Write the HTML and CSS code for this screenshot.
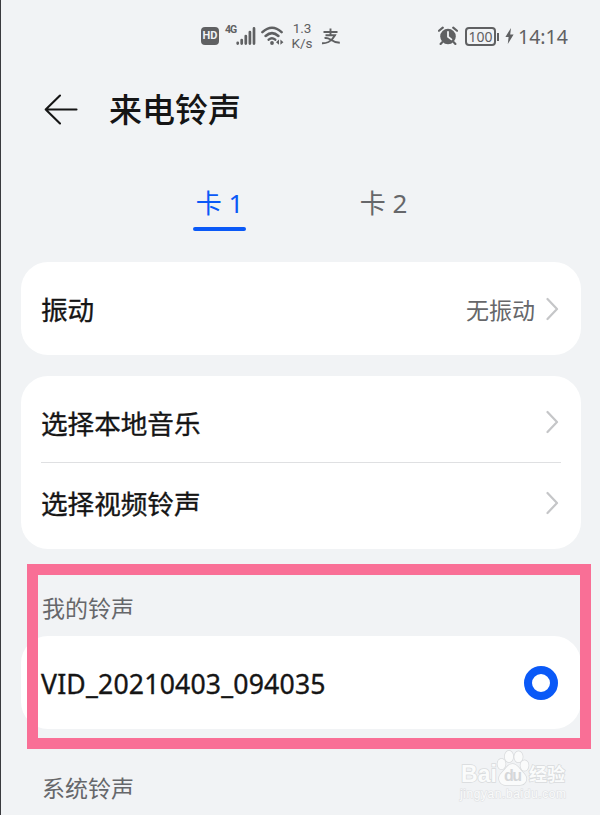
FILE: index.html
```html
<!DOCTYPE html>
<html lang="zh-CN">
<head>
    <meta charset="UTF-8">
    <meta name="viewport" content="width=device-width, initial-scale=1.0">
    <title>来电铃声</title>
    <link rel="stylesheet" href="styles.css">
</head>
<body>
    <div class="status-bar">
        <span class="hd">HD</span>
        <span class="network">4G</span>
        <svg class="signal" width="20" height="18" viewBox="0 0 20 18">
            <path d="M1.7 16.6v-.8M5.7 16.6v-3.600M9.8 16.600V9M13.900 16.600V5M18 16.600V1.400" stroke="#5f6062" stroke-width="2.7" stroke-linecap="round"/>
        </svg>
        <svg class="wifi" width="23" height="20" viewBox="0 0 23 20">
            <path d="M1.4 6.2Q11 -2.8 20.6 6.2M4.6 10Q11 4.2 17.4 10M7.7 13.6Q11 10.8 14.2 13.6" fill="none" stroke="#5f6062" stroke-width="2.5" stroke-linecap="round"/>
            <circle cx="11" cy="17" r="1.9" fill="#5f6062"/>
            <path d="M18 13.6v5.2l-3-2.6zM19.4 13.6v5.2l3-2.6z" fill="#5f6062"/>
        </svg>
        <span class="speed">1.3<br>K/s</span>
        <svg class="pay" width="20" height="18" viewBox="0 0 20 18">
            <path d="M2.5 5h14M9.5 1.500v6.500M4.500 8.300H14Q11.500 13 7.500 15Q4 16.500 1 16.300M3.500 11.200Q6 10.500 9.500 12.500Q13.500 15.500 18.800 15.800" fill="none" stroke="#5f6062" stroke-width="1.9"/>
        </svg>
        <svg class="alarm" width="20" height="20" viewBox="0 0 20 20">
            <circle cx="10" cy="10.5" r="7.8" fill="#5f6062"/>
            <path d="M1 4.8L4.8 1.6M19 4.8L15.2 1.6M4.2 16.2L2.6 18M15.8 16.2L17.4 18" stroke="#5f6062" stroke-width="2.1" stroke-linecap="round"/>
            <path d="M10 5.8v5l3.4 2.6" fill="none" stroke="#f1f3f5" stroke-width="1.8" stroke-linecap="round"/>
        </svg>
        <span class="battery">100</span>
        <svg class="bolt" width="9" height="16" viewBox="0 0 9 16">
            <path d="M6 0L0.4 9H3.6L2.8 16L8.6 6.4H5.2z" fill="#5f6062"/>
        </svg>
        <span class="clock">14:14</span>
    </div>

    <div class="header">
        <svg width="34" height="32" viewBox="0 0 34 32">
            <path d="M16 1.5L1.7 15.500L16 29.500M1.7 15.500H32.5" fill="none" stroke="#151515" stroke-width="2.1" stroke-linecap="round" stroke-linejoin="round"/>
        </svg>
        <h1>来电铃声</h1>
    </div>

    <div class="tabs">
        <div class="tab active">卡 1</div>
        <div class="tab">卡 2</div>
    </div>

    <div class="card">
        <div class="row">
            <span>振动</span>
            <span class="value">无振动</span>
            <svg class="arrow" width="13" height="24" viewBox="0 0 13 24"><path d="M1.5 2L11 12L1.5 22"/></svg>
        </div>
    </div>

    <div class="card double">
        <div class="row">
            <span>选择本地音乐</span>
            <svg class="arrow" width="13" height="24" viewBox="0 0 13 24"><path d="M1.5 2L11 12L1.5 22"/></svg>
        </div>
        <div class="row">
            <span>选择视频铃声</span>
            <svg class="arrow" width="13" height="24" viewBox="0 0 13 24"><path d="M1.5 2L11 12L1.5 22"/></svg>
        </div>
    </div>

    <div class="section-title">我的铃声</div>
    <div class="card">
        <div class="row">
            <span class="file">VID_20210403_094035</span>
            <span class="radio"></span>
        </div>
    </div>
    <div class="section-title">系统铃声</div>

    <div class="highlight"></div>

    <div class="watermark">
        <svg width="114" height="60" viewBox="0 0 114 60">
            <g class="mark">
                <text class="brand" x="3" y="34" textLength="36">Bai</text>
                <ellipse cx="43.5" cy="16" rx="4" ry="5.2"/>
                <ellipse cx="51" cy="8.5" rx="4.2" ry="5.7"/>
                <ellipse cx="60.5" cy="8.8" rx="4.2" ry="5.5"/>
                <ellipse cx="66.5" cy="17.5" rx="4" ry="5.2"/>
                <path d="M54.5 16C50 16 48.5 20 45 23.5C41 27.5 40 30 42 34C44 38 49 37 54.5 37C60 37 65 38 67.5 34C69.5 30 68 27.5 64 23.5C60.5 20 59 16 54.5 16z"/>
                <text class="jingyan" x="71" y="33" textLength="36">经验</text>
            </g>
            <text class="du" x="46" y="33" textLength="18">du</text>
            <text class="site" x="2" y="50" textLength="106">jingyan.baidu.com</text>
        </svg>
    </div>
</body>
</html>
```
FILE: styles.css
```css
* {
    box-sizing: border-box;
}
body {
    margin: 0;
    height: 815px;
    padding: 0 19px 0 20px;
    border-left: 1px solid #3a3a3e;
    background: #f1f3f5;
    color: #151515;
    font-family: "Noto Sans", "Noto Sans CJK SC", sans-serif;
    position: relative;
    overflow: hidden;
}
.status-bar {
    display: flex;
    align-items: center;
    height: 72px;
    padding-left: 180px;
    color: #5f6062;
}
.hd {
    width: 18px;
    height: 18px;
    border-radius: 4px;
    background: #5f6062;
    color: #f1f3f5;
    font: bold 11px/18px "Roboto", sans-serif;
    text-align: center;
}
.network {
    margin: -12px 0 0 6px;
    width: 10px;
    font: bold 10.5px/12px "Roboto", sans-serif;
    letter-spacing: -1px;
}
.signal {
    margin-left: 1px;
}
.wifi {
    margin-left: 5px;
}
.speed {
    width: 22px;
    margin-left: 7px;
    font: 13.5px/15px "Roboto", sans-serif;
    text-align: center;
}
.pay {
    margin-left: 8px;
}
.alarm {
    margin-left: 97px;
}
.battery {
    width: 31px;
    height: 19px;
    margin-left: 7px;
    border: 2px solid #5f6062;
    border-radius: 4px;
    font: 14px/15px "Noto Sans", sans-serif;
    text-align: center;
    position: relative;
}
.battery::after {
    content: "";
    position: absolute;
    top: 4px;
    right: -5px;
    width: 2px;
    height: 8px;
    background: #5f6062;
}
.bolt {
    margin-left: 9px;
}
.clock {
    margin-left: 4px;
    font-size: 19.5px;
}
.header {
    display: flex;
    align-items: center;
    height: 76px;
    padding-left: 23px;
    gap: 31px;
}
.header h1 {
    margin: 0;
    font-size: 33px;
    font-weight: 500;
    line-height: 40px;
}
.tabs {
    display: flex;
    gap: 111px;
    height: 114px;
    padding: 35px 0 0 172px;
}
.tab {
    width: 53px;
    height: 48px;
    color: #66676a;
    font-size: 26px;
    line-height: 40px;
    text-align: center;
    white-space: nowrap;
}
.tab.active {
    color: #0a59f7;
    position: relative;
}
.tab.active::after {
    content: "";
    position: absolute;
    left: 0;
    bottom: 0;
    width: 53px;
    height: 4px;
    border-radius: 2px;
    background: #0a59f7;
}
.card {
    height: 93px;
    padding: 0 20px;
    border-radius: 27px;
    background: #fff;
}
.card.double {
    height: 173px;
    margin-top: 21px;
    padding-top: 6px;
}
.row {
    display: flex;
    align-items: center;
    height: 93px;
    font-size: 26.6px;
    -webkit-text-stroke: 0.35px #151515;
}
.double .row {
    height: 80px;
}
.double .row + .row {
    border-top: 1px solid #dfe0e2;
}
.value {
    margin-left: auto;
    color: #66676a;
    font-size: 23px;
    -webkit-text-stroke: 0;
}
.arrow {
    margin-left: auto;
    margin-right: 2px;
    fill: none;
    stroke: #c5c6c8;
    stroke-width: 2.2;
    stroke-linecap: round;
    stroke-linejoin: round;
}
.value + .arrow {
    margin-left: 11px;
}
.file {
    padding-top: 2px;
    letter-spacing: 0.2px;
}
.radio {
    width: 34px;
    height: 34px;
    margin-left: auto;
    margin-right: 3px;
    border: 8.5px solid #0a59f7;
    border-radius: 50%;
}
.section-title {
    height: 87px;
    padding: 42px 21px 0;
    color: #66676a;
    font-size: 23px;
    line-height: 34px;
}
.highlight {
    position: absolute;
    left: 26px;
    top: 564px;
    width: 564px;
    height: 185px;
    border: 11px solid #f96f96;
}
.watermark {
    position: absolute;
    left: 457px;
    top: 748px;
}
.watermark svg {
    display: block;
}
.mark {
    fill: #fafbfb;
    stroke: #d9dbdd;
    stroke-width: 1.5;
    paint-order: stroke;
}
.brand {
    font: bold 23px "Liberation Sans", sans-serif;
}
.jingyan {
    font: bold 18px "Noto Sans CJK SC", sans-serif;
}
.du {
    fill: #d5d7d9;
    font: bold 16px "Liberation Sans", sans-serif;
}
.site {
    fill: #fafbfb;
    stroke: #dfe1e3;
    stroke-width: 1.2;
    paint-order: stroke;
    font: 12px "Liberation Sans", sans-serif;
}
```
